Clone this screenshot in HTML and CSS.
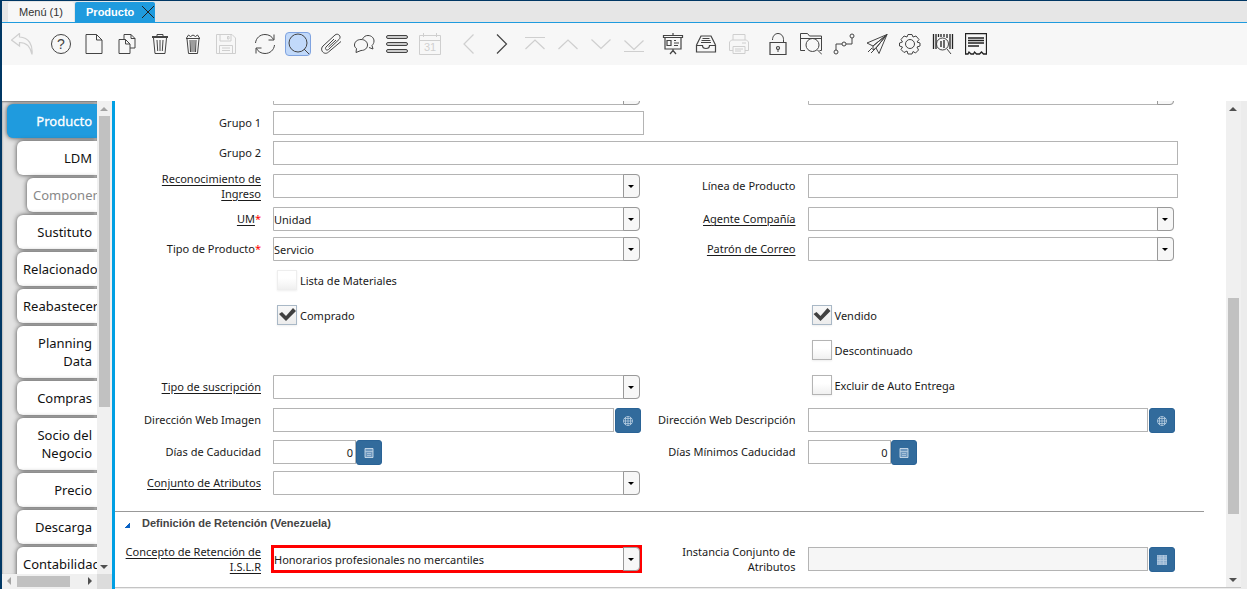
FILE: index.html
```html
<!DOCTYPE html>
<html lang="es">
<head>
    <meta charset="UTF-8">
    <meta name="viewport" content="width=device-width, initial-scale=1.0">
    <title>Producto</title>
    <link rel="stylesheet" href="styles.css">
</head>
<body>
    <nav class="windows">
        <a class="window" href="#menu">Menú (1)</a>
        <a class="window current" href="#producto">Producto
            <svg width="12" height="12" viewBox="0 0 12 12"><path d="M0 0l12 12M12 0L0 12"/></svg>
        </a>
    </nav>

    <div class="toolbar">
        <div class="tools">
            <button disabled aria-label="Deshacer"><svg viewBox="0 0 22 22"><path class="bold" d="M8.500.5L.5 7l8 6v-3.500c7 0 11 4 12.500 12C22 12 18 4.500 8.500 4z"/></svg></button>
        </div>
        <div class="tools">
            <button aria-label="Ayuda"><svg viewBox="0 0 22 22"><circle cx="11" cy="11" r="9.5"/><text x="11" y="16" font-size="14">?</text></svg></button>
            <button aria-label="Nuevo"><svg viewBox="0 0 22 22"><path d="M3 1.5h10.500l5.500 5.500v13.500H3zM13.500 1.500V7H19"/></svg></button>
            <button aria-label="Copiar"><svg viewBox="0 0 22 22"><path d="M3 6.500h6.500l4.500 4.500v9.500H3zM9.500 6.500V11H14M8 6V1.500h7l4 4v9.500h-5M15 1.500v4h4"/></svg></button>
            <button aria-label="Borrar"><svg viewBox="0 0 22 22"><path d="M3 3.500h16M3 4.500h16M8 3V1.500h6V3M4.500 5l1.500 15.500h10L17.500 5M8 7l.7 11M11 7v11M14 7l-.7 11"/></svg></button>
            <button aria-label="Borrar selección"><svg viewBox="0 0 22 22"><path d="M4 5.500h14M4.500 5l2-3 2 1.500L11 2l2.500 1.500 2-1.500 2 3M5 6l1.500 14.500h9L17 6M8 7l.5 12M10 7v12M12 7v12M14 7l-.5 12"/></svg></button>
            <button disabled aria-label="Guardar"><svg viewBox="0 0 22 22"><path d="M1.500 1.500H17l3.500 3.500v15.500h-19zM5 1.500V8h11V1.500M12.500 3.500h1.500v2.500h-1.500zM4.500 20V12.500h13V20M7 15h8M7 17.500h8"/></svg></button>
        </div>
        <div class="tools">
            <button aria-label="Actualizar"><svg viewBox="0 0 22 22"><path d="M1.500 10C2 5 6 1.500 11 1.500c4 0 7 2 8.500 5M20 1.500v5.500h-5.500M20.500 12c-.5 5-4.500 8.500-9.500 8.500-4 0-7-2-8.500-5M2 20.500V15h5.500"/></svg></button>
            <button class="pressed" aria-label="Buscar"><svg viewBox="0 0 22 22"><circle cx="11" cy="10" r="9"/><path d="M17 16l5 5"/></svg></button>
            <button aria-label="Adjunto"><svg viewBox="0 0 22 22"><path d="M14 6l-8 8c-1.500 2 .5 4 2.500 2.500L19 6.500c3-3-1-7-4-4.500L3 13c-4 4 1.500 10 5.500 6L21 8.500M16 7l-7.500 7"/></svg></button>
            <button aria-label="Chat"><svg viewBox="0 0 22 22"><path d="M9.500 6C11 3.500 12.500 2.500 15 2.500c3.500 0 6 2.500 6 5.500 0 2-1 3.500-2 4.500l1 3.500-4-1.500"/><path d="M8 6.500c4 0 6.500 2.500 6.500 5.500S12 17.500 8 17.500l-5 2 .5-4C2 14.500 1.500 13.500 1.500 12 1.500 9 4 6.500 8 6.500z"/></svg></button>
            <button aria-label="Vista de lista"><svg viewBox="0 0 22 22"><g class="thick"><rect x=".5" y="2.500" width="21" height="3" rx="1.500"/><rect x=".5" y="9.500" width="21" height="3" rx="1.500"/><rect x=".5" y="16.500" width="21" height="3" rx="1.500"/></g></svg></button>
            <button disabled aria-label="Calendario"><svg viewBox="0 0 22 22"><path d="M.5 2.500h21v19H.5zM.5 7.500h21M4.500 0v4M17.500 0v4"/><text x="11" y="18" font-size="11">31</text></svg></button>
        </div>
        <div class="tools">
            <button disabled aria-label="Anterior"><svg viewBox="0 0 22 22"><path class="bold" d="M15.500 1.500L6 11l9.500 9.500"/></svg></button>
            <button aria-label="Siguiente"><svg viewBox="0 0 22 22"><path class="bold" d="M6 1.500l9.500 9.500L6 20.500"/></svg></button>
            <button disabled aria-label="Primero"><svg viewBox="0 0 22 22"><path class="bold" d="M1 4.500h20M1.500 16L11 7l9.500 9"/></svg></button>
            <button disabled aria-label="Arriba"><svg viewBox="0 0 22 22"><path class="bold" d="M1.500 16L11 7l9.500 9"/></svg></button>
            <button disabled aria-label="Abajo"><svg viewBox="0 0 22 22"><path class="bold" d="M1.500 6.500l9.500 9 9.500-9"/></svg></button>
            <button disabled aria-label="Último"><svg viewBox="0 0 22 22"><path class="bold" d="M1 18.500h20M1.500 7.500l9.500 9 9.500-9"/></svg></button>
        </div>
        <div class="tools">
            <button aria-label="Informe"><svg viewBox="0 0 22 22"><path class="bold" d="M1.500 2.500h19v2h-19zM3 4.500V16h16V4.500M11 0v2M11 16v2M11 17.500L8 21M11 17.500l3 3.500M5 7.500h4v5H5zM12 7.500h2M12 10h5M12 12.500h4"/></svg></button>
            <button aria-label="Archivo"><svg viewBox="0 0 22 22"><path class="bold" d="M1.500 12.500h6c0 4 7 4 7 0h6v6.500h-19zM1.500 12L6 3h10l4.500 9M7.500 5.500h7M6.500 7.500h9M6 9.500h10"/></svg></button>
            <button disabled aria-label="Imprimir"><svg viewBox="0 0 22 22"><path d="M5 7V1.500h12V7M5 17.500H1.500V9l2-2h15l2 2v8.500H17M5 13.500h12v7H5zM7 16h8M7 18h6M14 10h4"/></svg></button>
        </div>
        <div class="tools">
            <button aria-label="Bloquear"><svg viewBox="0 0 22 22"><path class="bold" d="M3 9.500h16v12H3z"/><path d="M5.500 7C5.500 3 8 .5 11 .5s5.500 2.500 5.500 6v3M11 16v3"/><circle class="bold" cx="11" cy="15" r="1.500"/></svg></button>
            <button aria-label="Zoom"><svg viewBox="0 0 22 22"><path d="M5 17.500H.5V.5h7l2 2.500h12v14.500h-2M.5 5.500h21"/><circle cx="12.500" cy="12" r="6.500"/><path d="M17.500 17l4.500 4.500"/></svg></button>
            <button aria-label="Flujo de trabajo"><svg viewBox="0 0 22 22"><circle cx="3" cy="19" r="2"/><circle cx="11" cy="11" r="2"/><circle cx="19" cy="3" r="2"/><path d="M3 17v-6h6M13 11h6V5"/></svg></button>
            <button aria-label="Solicitudes"><svg viewBox="0 0 22 22"><path d="M21 1.500L1 10l6 3zM21 1.500l-8 19L10 15zM7 13L21 1.500 10 15M7 13v4l3-2M2 19l4-4M5 20l4-4"/></svg></button>
            <button aria-label="Proceso"><svg viewBox="0 0 22 22"><circle cx="11" cy="11" r="4.500"/><path d="M9 1.500h4l1 2.500 3-1 3 3.500-2 2.500 3 1v3l-3 1 1.500 3-3 3-2.500-1.500-1 2.500H9L8 18l-3 1.500-3-3L3.500 14l-3-1v-3l3-1L2 6.500 5 3l3 1z"/></svg></button>
            <button aria-label="Producto"><svg viewBox="0 0 22 22"><path class="dark" d="M1.500 1v15M4 1v15M6.500 1v3M9 1v3M12 1v3M15 1v4M18 1v15M20.500 1v15M9 8v6M12 7v8"/><circle cx="10.500" cy="11" r="6"/><path d="M15 16l4 5"/></svg></button>
            <button aria-label="Comprobante"><svg viewBox="0 0 22 22"><path class="dark" d="M.5.500h21v20.500h-3l-2-2-2 2h-3l-2-2-1 2H6l-2-2-1 2H.5zM3 5h16M3 7.500h16M3 10h16M3 13h11"/></svg></button>
        </div>
    </div>

    <main class="workspace">
        <aside class="sidebar">
            <nav class="tabs">
                <a class="tab selected" href="#producto">Producto</a>
                <a class="tab" href="#ldm">LDM</a>
                <a class="tab child" href="#componentes">Componentes</a>
                <a class="tab" href="#sustituto">Sustituto</a>
                <a class="tab" href="#relacionado">Relacionado</a>
                <a class="tab" href="#reabastecer">Reabastecer</a>
                <a class="tab" href="#planning">Planning Data</a>
                <a class="tab" href="#compras">Compras</a>
                <a class="tab" href="#socio">Socio del Negocio</a>
                <a class="tab" href="#precio">Precio</a>
                <a class="tab" href="#descarga">Descarga</a>
                <a class="tab" href="#contabilidad">Contabilidad</a>
            </nav>
            <div class="vbar" aria-hidden="true">
                <i class="arrow up off"></i>
                <span class="thumb"></span>
                <i class="arrow down"></i>
            </div>
            <div class="hbar" aria-hidden="true">
                <i class="arrow left off"></i>
                <span class="thumb"></span>
                <i class="arrow right"></i>
            </div>
            <div class="corner"></div>
        </aside>

        <section class="content">
            <form class="form">
                <div class="row">
                    <div class="combo col2"><select aria-label="Categoría"><option></option></select></div>
                    <div class="combo col4"><select aria-label="Clase"><option></option></select></div>
                </div>
                <div class="row">
                    <label for="grupo1">Grupo 1</label>
                    <input type="text" id="grupo1">
                </div>
                <div class="row">
                    <label for="grupo2">Grupo 2</label>
                    <input type="text" id="grupo2" class="wide">
                </div>
                <div class="row tall">
                    <label for="ingreso" class="zoom">Reconocimiento de Ingreso</label>
                    <div class="combo"><select id="ingreso"><option></option></select></div>
                    <label for="linea">Línea de Producto</label>
                    <input type="text" id="linea">
                </div>
                <div class="row">
                    <label for="um"><span class="zoom">UM</span><b>*</b></label>
                    <div class="combo"><select id="um"><option>Unidad</option></select></div>
                    <label for="agente" class="zoom">Agente Compañía</label>
                    <div class="combo"><select id="agente"><option></option></select></div>
                </div>
                <div class="row">
                    <label for="tipo">Tipo de Producto<b>*</b></label>
                    <div class="combo"><select id="tipo"><option>Servicio</option></select></div>
                    <label for="patron" class="zoom">Patrón de Correo</label>
                    <div class="combo"><select id="patron"><option></option></select></div>
                </div>
                <div class="row checks">
                    <label class="check col2"><input type="checkbox" disabled>Lista de Materiales</label>
                </div>
                <div class="row checks">
                    <label class="check col2"><input type="checkbox" checked>Comprado</label>
                    <label class="check col4"><input type="checkbox" checked>Vendido</label>
                </div>
                <div class="row checks">
                    <label class="check col4"><input type="checkbox">Descontinuado</label>
                </div>
                <div class="row checks">
                    <label for="suscripcion" class="zoom">Tipo de suscripción</label>
                    <div class="combo"><select id="suscripcion"><option></option></select></div>
                    <label class="check col4"><input type="checkbox">Excluir de Auto Entrega</label>
                </div>
                <div class="row medium">
                    <label for="imagen">Dirección Web Imagen</label>
                    <div class="editor">
                        <input type="text" id="imagen">
                        <button type="button" aria-label="Abrir imagen"><svg viewBox="0 0 10 10"><circle cx="5" cy="5" r="4.500"/><path d="M5 0v10M2.500 1v8M7.500 1v8M0 5h10M1 2.500h8M1 7.500h8"/></svg></button>
                    </div>
                    <label for="descripcion">Dirección Web Descripción</label>
                    <div class="editor">
                        <input type="text" id="descripcion">
                        <button type="button" aria-label="Abrir descripción"><svg viewBox="0 0 10 10"><circle cx="5" cy="5" r="4.500"/><path d="M5 0v10M2.500 1v8M7.500 1v8M0 5h10M1 2.500h8M1 7.500h8"/></svg></button>
                    </div>
                </div>
                <div class="row medium">
                    <label for="dias">Días de Caducidad</label>
                    <div class="editor number">
                        <input type="text" id="dias" value="0">
                        <button type="button" aria-label="Calculadora"><svg viewBox="0 0 10 10"><path class="calc" d="M1 .5h8v9H1z"/><path d="M1 3.500h8M3 5.500h4M3 7.500h4"/></svg></button>
                    </div>
                    <label for="minimos">Días Mínimos Caducidad</label>
                    <div class="editor number">
                        <input type="text" id="minimos" value="0">
                        <button type="button" aria-label="Calculadora"><svg viewBox="0 0 10 10"><path class="calc" d="M1 .5h8v9H1z"/><path d="M1 3.500h8M3 5.500h4M3 7.500h4"/></svg></button>
                    </div>
                </div>
                <div class="row">
                    <label for="atributos" class="zoom">Conjunto de Atributos</label>
                    <div class="combo"><select id="atributos"><option></option></select></div>
                </div>

                <h2 class="group">Definición de Retención (Venezuela)</h2>

                <div class="row tall">
                    <label for="islr" class="zoom">Concepto de Retención de I.S.L.R</label>
                    <div class="combo marked"><select id="islr"><option>Honorarios profesionales no mercantiles</option></select></div>
                    <label for="instancia">Instancia Conjunto de Atributos</label>
                    <div class="editor">
                        <input type="text" id="instancia" readonly>
                        <button type="button" aria-label="Atributos"><svg viewBox="0 0 10 10"><path class="table" d="M0 0h10v10H0z"/><path d="M0 3h10M0 5.500h10M0 8h10M3 0v10M6.500 0v10"/></svg></button>
                    </div>
                </div>
            </form>
            <div class="vbar" aria-hidden="true">
                <i class="arrow up"></i>
                <span class="thumb"></span>
                <i class="arrow down"></i>
            </div>
        </section>
    </main>
</body>
</html>
```
FILE: styles.css
```css
*, *::before, *::after {
    box-sizing: border-box;
}

body {
    margin: 0;
    height: 100vh;
    display: flex;
    flex-direction: column;
    overflow: hidden;
    border-top: 1px solid #003764;
    border-left: 2px solid #003764;
    background: #fff;
    color: #1a1a1a;
    font: 11px/15px "Noto Sans", sans-serif;
}

button, input, select {
    margin: 0;
    font: inherit;
    color: inherit;
}

/* window tabs */
.windows {
    flex: none;
    display: flex;
    gap: 1px;
    height: 22px;
    padding: 1px 6px 0;
    background: #e6e6e6;
    border-bottom: 1px solid #1f9bde;
    font-family: "Liberation Sans", sans-serif;
}

.window {
    display: flex;
    align-items: center;
    padding: 0 11px;
    background: #f7f7f7;
    color: #333;
    text-decoration: none;
    border-radius: 2px 2px 0 0;
}

.window.current {
    gap: 8px;
    padding-right: 1px;
    background: #1f9bde;
    color: #fff;
    font-weight: bold;
}

.window svg {
    stroke: #222;
}

/* toolbar */
.toolbar {
    flex: none;
    display: flex;
    gap: 13px;
    height: 42px;
    margin-bottom: 36px;
    padding-left: 7px;
    align-items: center;
    background: #f7f7f7;
}

.tools {
    display: flex;
    gap: 7px;
}

.tools button {
    display: flex;
    justify-content: center;
    align-items: center;
    width: 26px;
    height: 24px;
    padding: 0;
    border: 1px solid transparent;
    border-radius: 4px;
    background: none;
}

.tools button:disabled {
    opacity: .22;
}

.tools button.pressed {
    border-color: #7fa3e0;
    background: #c1d9fa;
}

.tools svg {
    flex: none;
    width: 22px;
    height: 22px;
    fill: none;
    stroke: #444;
}

.tools text {
    fill: #444;
    stroke: none;
    font-family: "Liberation Sans", sans-serif;
    text-anchor: middle;
}

.tools .thick {
    fill: #ccc;
    stroke: #444;
}

.tools .bold {
    stroke-width: 1.200;
}

.tools .dark {
    stroke: #222;
    stroke-width: 1.300;
}

.workspace {
    flex: 1;
    display: flex;
    min-height: 0;
    background: #ececec;
}

/* sidebar */
.sidebar {
    flex: none;
    display: grid;
    grid-template-columns: 95px 15px;
    grid-template-rows: minmax(0, 1fr) 15px;
    border-right: 3px solid #009fe3;
    background: #e2e2e2;
}

.tabs {
    display: flex;
    flex-direction: column;
    gap: 3px;
    padding-top: 3px;
    overflow: hidden;
    box-shadow: inset 0 1px 2px #777;
}

.tab {
    flex: none;
    margin-left: 15px;
    padding: 8px 5px 8px 6px;
    border-radius: 6px 0 0 6px;
    background: #fff;
    box-shadow: 0 0 5px #444;
    color: #111;
    font-size: 13px;
    line-height: 18px;
    text-align: right;
    text-decoration: none;
}

.tab.child {
    margin-left: 25px;
    color: #888;
}

.tab.selected {
    margin-left: 5px;
    background: #1f9bde;
    color: #fff;
    -webkit-text-stroke: .3px #fff;
}

/* scrollbars */
.vbar, .hbar {
    display: flex;
    background: #f0f0f0;
}

.vbar {
    flex: none;
    flex-direction: column;
    width: 15px;
    padding: 0 2px;
}

.hbar {
    padding: 2px 0;
}

.thumb {
    background: #c1c1c1;
}

.sidebar .vbar .thumb {
    flex: 0 0 291px;
}

.hbar .thumb {
    flex: 0 0 53px;
}

.content .vbar .thumb {
    flex: 0 0 216px;
    margin-top: auto;
    margin-bottom: 58px;
}

.arrow {
    flex: none;
    width: 11px;
    height: 15px;
    background: #505050;
}

.up { clip-path: polygon(1px 10px, 9px 10px, 5px 6px); }
.down { clip-path: polygon(1px 6px, 9px 6px, 5px 10px); }
.left { clip-path: polygon(9px 1px, 9px 9px, 5px 5px); }
.right { clip-path: polygon(6px 1px, 6px 9px, 10px 5px); }

.hbar .arrow {
    width: 15px;
    height: 11px;
}

.arrow.off {
    background: #a3a3a3;
}

.sidebar .down {
    margin-top: auto;
}

.hbar .right {
    margin-left: auto;
}

.corner {
    background: #dcdcdc;
}

/* form */
.content {
    flex: 1;
    display: flex;
    min-width: 0;
    margin: 0 6px 1px 0;
    overflow: hidden;
    border-bottom: 1px solid #c4c4c4;
    background: #fff;
}

/* scrolled past the first fields */
.form {
    flex: 1;
    margin-top: -23px;
}

.row {
    display: grid;
    grid-template-columns: 137px minmax(0, 1fr) 140px minmax(0, 1fr);
    column-gap: 12px;
    align-items: center;
    min-height: 30px;
    padding: 0 48px 0 9px;
}

.tall { min-height: 36px; }
.medium { min-height: 32px; }
.checks { min-height: 35px; }

.col2 { grid-column: 2; }
.col4 { grid-column: 4; }
.wide { grid-column: 2 / -1; }

.row > label {
    padding-bottom: 1px;
    text-align: right;
}

.zoom {
    text-decoration: underline;
    text-underline-offset: 2px;
}

label b {
    color: #f00;
    font-weight: normal;
}

input[type="text"], select {
    display: block;
    width: 100%;
    height: 24px;
    padding: 1px 0 0;
    border: 1px solid #b4b4b4;
    border-radius: 0;
    background: #fff;
    appearance: none;
}

input[type="text"]:read-only {
    background: #f6f6f6;
}

.combo {
    position: relative;
    margin-right: 4px;
}

.combo select {
    border-radius: 0 4px 4px 0;
}

.combo::before {
    content: "";
    position: absolute;
    top: 0;
    right: 0;
    width: 17px;
    height: 24px;
    border: 1px solid #999;
    border-radius: 0 4px 4px 0;
    background: #f7f7f7;
    pointer-events: none;
}

.combo::after {
    content: "";
    position: absolute;
    top: 11px;
    right: 6px;
    border: 3px solid transparent;
    border-top-color: #000;
    border-bottom: 0;
    pointer-events: none;
}

.marked {
    outline: 3px solid #f00;
    outline-offset: -1px;
}

.row > .check {
    display: flex;
    align-items: center;
    align-self: start;
    gap: 3px;
    padding: 6px 0 0 4px;
    text-align: left;
}

.check input {
    width: 20px;
    height: 20px;
    border: 1px solid #b4b4b4;
    background: linear-gradient(#fff 40%, #f0f0f0);
    box-shadow: 0 1px 2px #eee;
    appearance: none;
}

.check input:checked {
    border-color: #a9b8c6;
    background: linear-gradient(#f8f8f8, #ececec);
}

.check input:checked::before {
    content: "";
    display: block;
    height: 18px;
    background: #404040;
    clip-path: polygon(1px 8px, 4px 6px, 8px 10px, 15px 2px, 18px 5px, 8px 15px);
}

.check input:disabled {
    border-color: #eee;
}

.editor {
    display: flex;
    gap: 1px;
    margin-right: 3px;
}

.editor input {
    flex: 1;
    min-width: 0;
}

.editor.number {
    gap: 0;
}

.editor.number input {
    flex: 0 0 83px;
    padding-right: 2px;
    text-align: right;
}

.editor button {
    flex: none;
    display: flex;
    align-items: center;
    justify-content: center;
    width: 26px;
    height: 25px;
    margin-bottom: -1px;
    padding: 0;
    border: 1px solid #2a6396;
    border-radius: 3px;
    background: #326b9c;
}

.editor svg {
    width: 10px;
    height: 10px;
    fill: none;
    stroke: #b5cbe0;
    stroke-width: .8;
}

.editor .calc {
    fill: #6f98bf;
    stroke: #dce8f3;
}

.editor .table {
    fill: #8fb0d0;
}

.group {
    display: flex;
    align-items: center;
    gap: 12px;
    height: 30px;
    margin: 13px 22px 0 0;
    padding: 0 0 7px 9px;
    border-top: 1px solid #999;
    color: #444;
    font: bold 11px/15px "Liberation Sans", sans-serif;
}

.group::before {
    content: "";
    width: 6px;
    height: 5px;
    margin-top: 5px;
    background: linear-gradient(to bottom right, transparent 50%, #0a62c4 50%);
}
```
